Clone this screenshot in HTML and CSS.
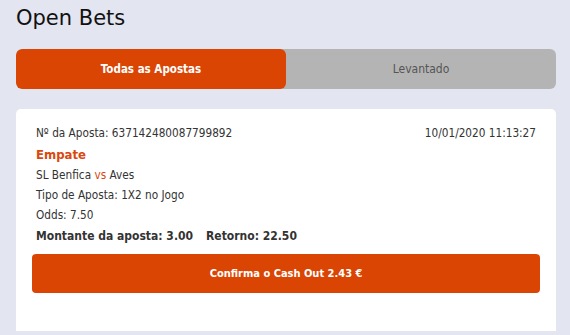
FILE: index.html
```html
<!DOCTYPE html>
<html lang="pt">
<head>
    <meta charset="UTF-8">
    <meta name="viewport" content="width=device-width, initial-scale=1.0">
    <title>Open Bets</title>
    <link rel="stylesheet" href="styles.css">
</head>
<body>

    <h2 class="page-title">Open Bets</h2>

    <!-- Tabs -->
    <div class="tabs">
        <div class="tab active">Todas as Apostas</div>
        <div class="tab">Levantado</div>
    </div>

    <!-- Bet card -->
    <div class="bet-card">
        <div class="bet-info">
            <div class="bet-row">
                <span>Nº da Aposta: 637142480087799892</span>
                <span>10/01/2020 11:13:27</span>
            </div>
            <div class="bet-pick">Empate</div>
            <div>SL Benfica <span class="vs">vs</span> Aves</div>
            <div>Tipo de Aposta: 1X2 no Jogo</div>
            <div>Odds: 7.50</div>
            <div class="bet-amounts">
                <span>Montante da aposta: 3.00</span>
                <span>Retorno: 22.50</span>
            </div>
        </div>
        <button class="cashout-btn">Confirma o Cash Out 2.43 €</button>
    </div>

</body>
</html>
```

FILE: styles.css
```css
body { font-family: "DejaVu Sans Condensed", "DejaVu Sans", sans-serif; margin: 0; padding: 0 14px 0 16px; background: #e3e5f0; color: #333; }
.page-title { font-family: "DejaVu Sans", sans-serif; font-weight: normal; font-size: 21px; color: #111; margin: 0; padding-top: 4px; height: 45px; line-height: 28px; }
.tabs { display: flex; height: 40px; border-radius: 6px; background: #b4b4b4; overflow: hidden; }
.tab { flex: 1; display: flex; align-items: center; justify-content: center; font-size: 12px; color: #555; }
.tab.active { background: #da4504; color: #fff; font-weight: bold; font-size: 11.5px; border-radius: 6px; }
.bet-card { background: #fff; margin-top: 20px; border-radius: 5px 5px 0 0; padding: 14px 16px 38px; }
.bet-info { padding: 0 4px; font-size: 11.7px; line-height: 20px; }
.bet-row { display: flex; justify-content: space-between; margin-bottom: 2px; }
.bet-pick { color: #d9480f; font-weight: bold; font-size: 13px; }
.vs { color: #d9480f; }
.bet-amounts { font-weight: bold; font-size: 12px; line-height: 23px; display: flex; gap: 13px; }
.cashout-btn { display: block; width: 100%; height: 39px; margin-top: 6px; border: none; border-radius: 4px; background: #da4504; color: #fff; font-family: "DejaVu Sans Condensed", sans-serif; font-weight: bold; font-size: 11px; }
```
